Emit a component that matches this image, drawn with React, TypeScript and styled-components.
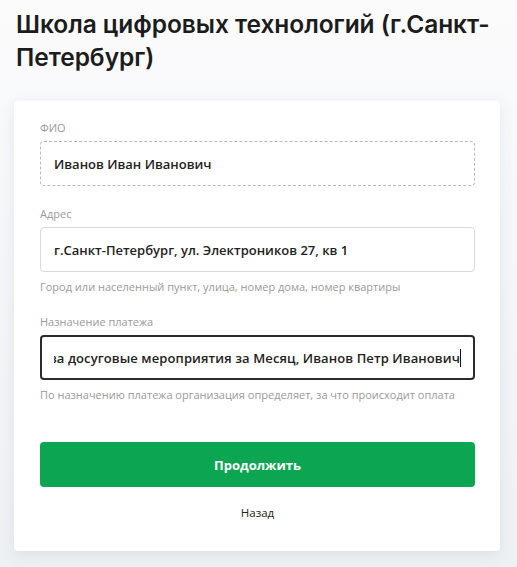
import React from "react";
import styled, { createGlobalStyle } from "styled-components";

const GlobalStyle = createGlobalStyle`
  html, body {
    margin: 0;
    padding: 0;
  }
  body {
    background: linear-gradient(180deg, #ffffff 0%, #f1f3f6 100%);
    font-family: "Open Sans", "Liberation Sans", sans-serif;
    color: #1f1f1f;
  }
`;

const Page = styled.div`
  width: 517px;
  height: 567px;
  box-sizing: border-box;
  padding: 8px 17px 0 14px;
  background: linear-gradient(180deg, #fbfbfc 0%, #eef1f4 100%);
`;

const Title = styled.h1`
  margin: 0 0 27px 2px;
  font-family: Inter, "Noto Sans", sans-serif;
  font-size: 24.5px;
  font-weight: 600;
  line-height: 33px;
  letter-spacing: -0.05px;
  color: #1c1c1c;
`;

const Card = styled.div`
  background: #ffffff;
  border-radius: 4px;
  box-shadow: 0 4px 16px rgba(40, 60, 90, 0.09);
  padding: 19px 25px 31px 26px;
  display: flex;
  flex-direction: column;
`;

const Field = styled.div`
  display: flex;
  flex-direction: column;
  margin-bottom: 20px;
`;

const Label = styled.div`
  font-size: 11px;
  line-height: 15px;
  color: #9a9a9a;
  margin-bottom: 6px;
`;

type BoxProps = { $variant: "dashed" | "plain" | "focus" };

const Box = styled.div<BoxProps>`
  height: 45px;
  box-sizing: border-box;
  border-radius: 4px;
  display: flex;
  align-items: center;
  padding: 0 12px 0 13px;
  border: ${(p) =>
    p.$variant === "dashed"
      ? "1px dashed #b9b9b9"
      : p.$variant === "focus"
      ? "2px solid #2b2b2b"
      : "1px solid #dadada"};
  padding-left: ${(p) => (p.$variant === "focus" ? "12px" : "13px")};
  font-size: 13px;
  font-weight: 600;
  color: #222;
`;

const Clip = styled.div`
  flex: 1;
  overflow: hidden;
  white-space: nowrap;
  display: flex;
  justify-content: flex-end;
  align-items: center;
`;

const Value = styled.span`
  flex-shrink: 0;
  letter-spacing: 0.1px;
`;

const Caret = styled.span`
  flex-shrink: 0;
  width: 1px;
  height: 18px;
  background: #111;
`;

const Hint = styled.div`
  margin-top: 7px;
  font-size: 11px;
  line-height: 15px;
  color: #9a9a9a;
`;

const Button = styled.button`
  margin-top: 20px;
  height: 45px;
  border: none;
  border-radius: 4px;
  background: #0ca552;
  color: #ffffff;
  font-family: "Open Sans", sans-serif;
  font-size: 13px;
  font-weight: 700;
  cursor: pointer;
`;

const Back = styled.button`
  margin-top: 18px;
  align-self: center;
  background: none;
  border: none;
  padding: 0;
  font-family: "Open Sans", sans-serif;
  font-size: 11.5px;
  color: #222;
`;

export default function App() {
  return (
    <>
      <GlobalStyle />
      <Page>
        <Title>Школа цифровых технологий (г.Санкт-Петербург)</Title>
        <Card>
          <Field>
            <Label>ФИО</Label>
            <Box $variant="dashed">Иванов Иван Иванович</Box>
          </Field>
          <Field>
            <Label>Адрес</Label>
            <Box $variant="plain">г.Санкт-Петербург, ул. Электроников 27, кв 1</Box>
            <Hint>Город или населенный пункт, улица, номер дома, номер квартиры</Hint>
          </Field>
          <Field>
            <Label>Назначение платежа</Label>
            <Box $variant="focus">
              <Clip>
                <Value>Оплата за досуговые мероприятия за Месяц, Иванов Петр Иванович</Value>
                <Caret />
              </Clip>
            </Box>
            <Hint>По назначению платежа организация определяет, за что происходит оплата</Hint>
          </Field>
          <Button>Продолжить</Button>
          <Back>Назад</Back>
        </Card>
      </Page>
    </>
  );
}
